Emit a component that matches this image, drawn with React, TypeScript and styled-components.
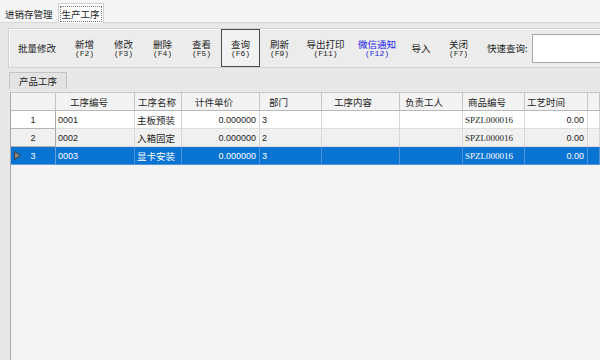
import React from 'react';
import styled, { createGlobalStyle } from 'styled-components';

const GlobalStyle = createGlobalStyle`
    html, body {
        margin: 0;
        padding: 0;
        background: #e8e8e8;
    }
    body {
        font-family: "Noto Sans CJK SC", "Liberation Sans", sans-serif;
        font-size: 9.5px;
        color: #1e1e1e;
    }
`;

const Page = styled.div`
    width: 600px;
    height: 360px;
    display: flex;
    flex-direction: column;
    overflow: hidden;
`;

const TabStrip = styled.div`
    height: 22px;
    flex: none;
    display: flex;
    align-items: flex-end;
    background: #f5f5f5;
    border-bottom: 1px solid #d6d6d6;
`;

const Tab = styled.div<{ $active?: boolean }>`
    height: ${p => (p.$active ? '20px' : '18px')};
    box-sizing: border-box;
    display: flex;
    align-items: center;
    padding: 0 ${p => (p.$active ? '1px' : '2px')};
    background: ${p => (p.$active ? '#ffffff' : 'transparent')};
    border: 1px solid ${p => (p.$active ? '#d0d0d0' : 'transparent')};
    border-bottom: none;
    margin-bottom: ${p => (p.$active ? '-1px' : '0')};
    span {
        padding: 1px 1px;
        border: 1px dotted ${p => (p.$active ? '#777' : 'transparent')};
        line-height: 12px;
        white-space: nowrap;
    }
`;

const Content = styled.div`
    flex: 1;
    display: flex;
    flex-direction: column;
    padding: 5px 0 0 8px;
    min-height: 0;
`;

const Toolbar = styled.div`
    height: 40px;
    box-sizing: border-box;
    flex: none;
    display: flex;
    align-items: stretch;
    background: #ececec;
    border: 1px solid #d2d2d2;
    border-right: none;
    box-shadow: inset 1px 1px 0 #f8f8f8;
`;

const ToolButton = styled.div<{ $w: number; $pressed?: boolean; $blue?: boolean }>`
    width: ${p => p.$w}px;
    flex: none;
    box-sizing: border-box;
    display: flex;
    flex-direction: column;
    align-items: center;
    justify-content: center;
    color: ${p => (p.$blue ? '#1c1cf0' : '#1e1e1e')};
    border: 1px solid ${p => (p.$pressed ? '#4a4a4a' : 'transparent')};
    background: ${p => (p.$pressed ? '#f2f2f2' : 'transparent')};
    .cap {
        display: block;
        height: 10px;
        line-height: 10px;
        overflow: visible;
        white-space: nowrap;
    }
    .key {
        display: block;
        margin-top: 1px;
        font-family: "Liberation Mono", monospace;
        font-size: 8px;
        line-height: 8px;
        height: 8px;
        white-space: nowrap;
    }
`;

const SearchLabel = styled.div`
    margin-left: 10px;
    display: flex;
    align-items: center;
    white-space: nowrap;
`;

const SearchInput = styled.div`
    margin: 5px 0 4px 4px;
    flex: 1;
    background: #ffffff;
    border: 1px solid #a8a8a8;
    border-right: none;
`;

const SubTab = styled.div`
    margin: 4px 0 0 1px;
    width: 58px;
    height: 17px;
    box-sizing: border-box;
    display: flex;
    align-items: center;
    justify-content: center;
    background: #e3e3e3;
    border: 1px solid #c4c4c4;
    border-bottom: none;
`;

const Grid = styled.div`
    margin: 3px 0 0 2px;
    flex: 1;
    background: #f4f4f4;
    border-left: 1px solid #a9a9a9;
    border-top: 1px solid #c9c9c9;
`;

const cols = '45px 79px 47px 78px 62px 78px 63px 62px 63px 1fr';

const Row = styled.div<{ $bg: string; $sel?: boolean }>`
    display: grid;
    grid-template-columns: ${cols};
    height: 18px;
    background: ${p => p.$bg};
    color: ${p => (p.$sel ? '#ffffff' : '#1e1e1e')};
`;

const HeadCell = styled.div<{ $pad: number }>`
    box-sizing: border-box;
    display: flex;
    align-items: center;
    padding-left: ${p => p.$pad}px;
    background: #f3f3f3;
    border-right: 1px solid #c6c6c6;
    border-bottom: 1px solid #b8b8b8;
    white-space: nowrap;
    overflow: hidden;
`;

const RowHead = styled.div<{ $sel?: boolean }>`
    position: relative;
    box-sizing: border-box;
    display: flex;
    align-items: center;
    justify-content: center;
    font-family: "Liberation Sans", sans-serif;
    font-size: 9px;
    border-right: 1px solid ${p => (p.$sel ? '#6a9fd6' : '#a9a9a9')};
    border-bottom: 1px solid ${p => (p.$sel ? '#6a9fd6' : '#b4b4b4')};
`;

const Marker = styled.svg`
    position: absolute;
    left: 3px;
    top: 4px;
`;

const Cell = styled.div<{ $right?: boolean; $font?: string; $sel?: boolean }>`
    box-sizing: border-box;
    display: flex;
    align-items: center;
    justify-content: ${p => (p.$right ? 'flex-end' : 'flex-start')};
    padding: 0 ${p => (p.$right ? '3px' : '0')} 0 2px;
    font-family: ${p => p.$font || '"Noto Sans CJK SC", sans-serif'};
    font-size: ${p => (p.$font ? '9px' : '9.5px')};
    border-right: 1px solid ${p => (p.$sel ? '#4f93d8' : '#d6d6d6')};
    border-bottom: 1px solid ${p => (p.$sel ? '#4f93d8' : '#dedede')};
    white-space: nowrap;
    overflow: hidden;
`;

const tools = [
    { cap: '批量修改', w: 56 },
    { cap: '新增', key: '(F2)', w: 39 },
    { cap: '修改', key: '(F3)', w: 39 },
    { cap: '删除', key: '(F4)', w: 39 },
    { cap: '查看', key: '(F5)', w: 39 },
    { cap: '查询', key: '(F6)', w: 39, pressed: true },
    { cap: '刷新', key: '(F9)', w: 39 },
    { cap: '导出打印', key: '(F11)', w: 53 },
    { cap: '微信通知', key: '(F12)', w: 50, blue: true },
    { cap: '导入', w: 38 },
    { cap: '关闭', key: '(F7)', w: 37 },
];

const headers = [
    { t: '', pad: 0 },
    { t: '工序编号', pad: 14 },
    { t: '工序名称', pad: 3 },
    { t: '计件单价', pad: 13 },
    { t: '部门', pad: 9 },
    { t: '工序内容', pad: 12 },
    { t: '负责工人', pad: 5 },
    { t: '商品编号', pad: 5 },
    { t: '工艺时间', pad: 2 },
    { t: '', pad: 0 },
];

const rows = [
    { no: '1', code: '0001', name: '主板预装', dept: '3' },
    { no: '2', code: '0002', name: '入箱固定', dept: '2' },
    { no: '3', code: '0003', name: '显卡安装', dept: '3' },
];

const SANS = '"Liberation Sans", sans-serif';
const SERIF = '"Liberation Serif", serif';

const App = () => {
    return (
        <Page>
            <GlobalStyle />
            <TabStrip>
                <Tab><span>进销存管理</span></Tab>
                <Tab $active><span>生产工序</span></Tab>
            </TabStrip>
            <Content>
                <Toolbar>
                    {tools.map(t => (
                        <ToolButton key={t.cap} $w={t.w} $pressed={t.pressed} $blue={t.blue}>
                            <span className="cap">{t.cap}</span>
                            {t.key && <span className="key">{t.key}</span>}
                        </ToolButton>
                    ))}
                    <SearchLabel>快速查询:</SearchLabel>
                    <SearchInput />
                </Toolbar>
                <SubTab>产品工序</SubTab>
                <Grid>
                    <Row $bg="#f3f3f3">
                        {headers.map((h, i) => (
                            <HeadCell key={i} $pad={h.pad}>{h.t}</HeadCell>
                        ))}
                    </Row>
                    {rows.map((r, i) => {
                        const sel = i === 2;
                        const bg = sel ? '#0a74d2' : i % 2 === 0 ? '#ffffff' : '#f0f0f0';
                        return (
                            <Row key={r.no} $bg={bg} $sel={sel}>
                                <RowHead $sel={sel}>
                                    {sel && (
                                        <Marker width="7" height="9" viewBox="0 0 7 9">
                                            <path d="M0.5 0.5 L6.5 4.5 L0.5 8.5 Z" fill="#8a8a8a" stroke="#3a3a3a" strokeWidth="1" />
                                        </Marker>
                                    )}
                                    {r.no}
                                </RowHead>
                                <Cell $font={SANS} $sel={sel}>{r.code}</Cell>
                                <Cell $sel={sel}>{r.name}</Cell>
                                <Cell $font={SANS} $right $sel={sel}>0.000000</Cell>
                                <Cell $font={SANS} $sel={sel}>{r.dept}</Cell>
                                <Cell $sel={sel} />
                                <Cell $sel={sel} />
                                <Cell $font={SERIF} $sel={sel}>SPZL000016</Cell>
                                <Cell $font={SANS} $right $sel={sel}>0.00</Cell>
                                <Cell $sel={sel} />
                            </Row>
                        );
                    })}
                </Grid>
            </Content>
        </Page>
    );
};

export default App;
